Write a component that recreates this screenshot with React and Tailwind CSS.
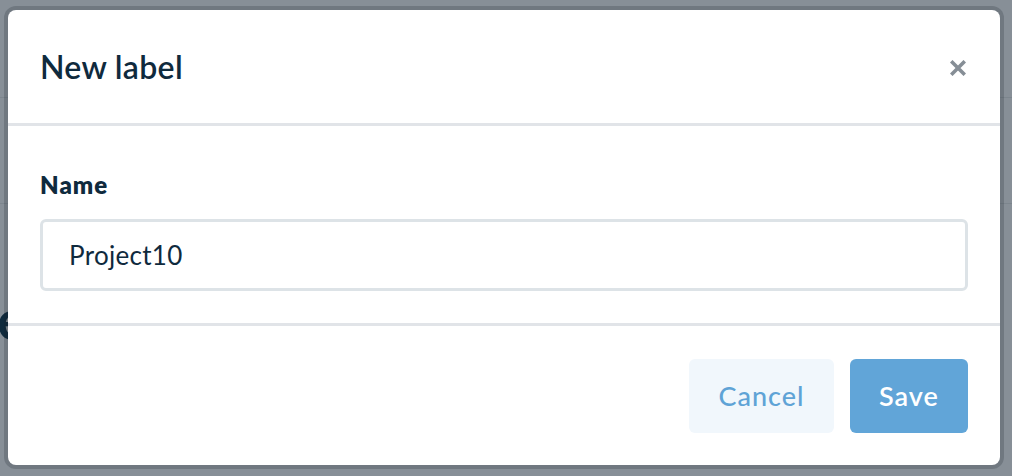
export default function App() {
  return (
    <div className="relative h-[476px] w-full overflow-hidden bg-[#878f97] font-['Lato',sans-serif]">
      {/* page behind the overlay */}
      <div className="h-[98px] border-b border-[#7c858d]" />
      <div className="h-[106px] border-b border-[#7c858d]" />
      <div className="-ml-[3px] mt-[87px] text-[56px] font-bold leading-none text-[#0f2a3d]">
        e
      </div>

      {/* modal */}
      <div className="absolute left-[8px] top-[10px] flex h-[455px] w-[992px] flex-col rounded-[8px] bg-white shadow-[0_0_0_4px_rgba(20,30,40,0.2)]">
        <div className="flex h-[116px] items-center justify-between border-b-[3px] border-[#e1e4e8] pl-[32px] pr-[34px]">
          <h2 className="text-[32px] font-semibold tracking-[0.3px] text-[#0f2a3d]">New label</h2>
          <svg width="16" height="16" viewBox="0 0 16 16" className="mt-[3px]">
            <path d="M2.5 2.5L13.5 13.5M13.5 2.5L2.5 13.5" stroke="#868e96" strokeWidth="3.6" strokeLinecap="square" />
          </svg>
        </div>

        <div className="flex h-[200px] flex-col border-b-[3px] border-[#e1e4e8] px-[32px] pt-[47px]">
          <label className="text-[24px] font-extrabold leading-none tracking-[1px] text-[#0f2a3d]">Name</label>
          <div className="mt-[22px] flex h-[72px] items-center rounded-[6px] border-[3px] border-[#dde3e7] px-[26px]">
            <span className="text-[26px] tracking-[0.3px] text-[#0f2a3d]">Project10</span>
          </div>
        </div>

        <div className="flex flex-1 items-start justify-end gap-[16px] px-[32px] pt-[33px]">
          <button className="h-[74px] w-[145px] rounded-[6px] bg-[#f1f7fc] text-[27px] font-medium tracking-[1px] text-[#5fa3d6]">
            Cancel
          </button>
          <button className="h-[74px] w-[118px] rounded-[6px] bg-[#61a5d8] text-[27px] font-semibold tracking-[1px] text-white">
            Save
          </button>
        </div>
      </div>
    </div>
  );
}
